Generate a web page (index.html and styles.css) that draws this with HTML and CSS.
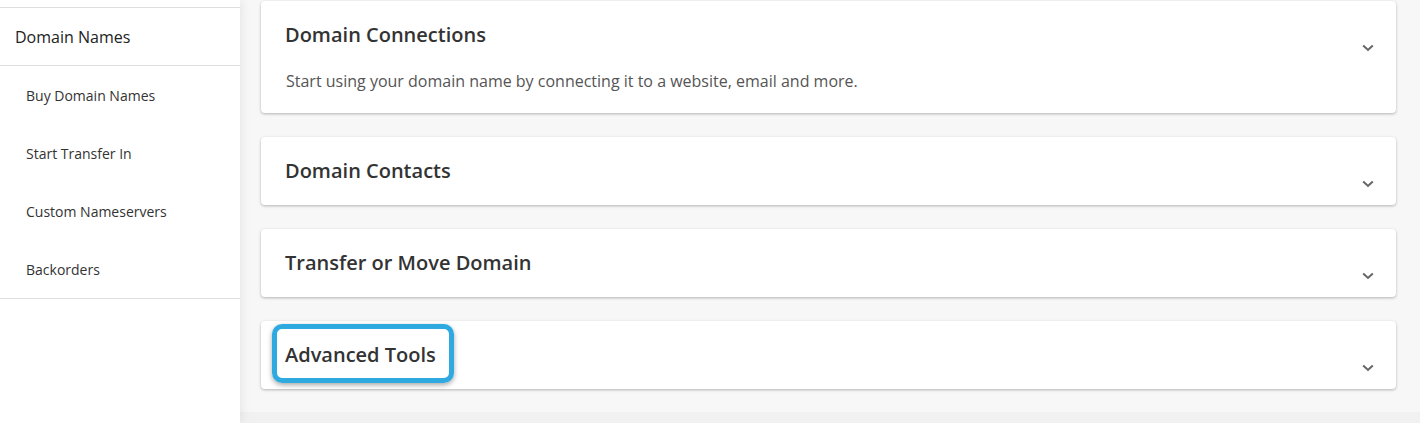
FILE: index.html
```html
<!DOCTYPE html>
<html>
<head>
<meta charset="utf-8">
<link rel="stylesheet" href="styles.css">
</head>
<body>
<div class="page">
  <aside class="sidebar">
    <div class="side-top"></div>
    <div class="side-head">Domain Names</div>
    <ul class="side-list">
      <li>Buy Domain Names</li>
      <li>Start Transfer In</li>
      <li>Custom Nameservers</li>
      <li>Backorders</li>
    </ul>
  </aside>
  <main class="main">
    <section class="card">
      <div class="card-head">
        <h2 class="card-title">Domain Connections</h2>
        <svg class="chev" width="12" height="8" viewBox="0 0 12 8"><path d="M1.2 1.5 L6 6 L10.8 1.5" fill="none" stroke="#666" stroke-width="2"/></svg>
      </div>
      <p class="card-desc">Start using your domain name by connecting it to a website, email and more.</p>
    </section>
    <section class="card">
      <div class="card-head">
        <h2 class="card-title">Domain Contacts</h2>
        <svg class="chev" width="12" height="8" viewBox="0 0 12 8"><path d="M1.2 1.5 L6 6 L10.8 1.5" fill="none" stroke="#666" stroke-width="2"/></svg>
      </div>
    </section>
    <section class="card">
      <div class="card-head">
        <h2 class="card-title">Transfer or Move Domain</h2>
        <svg class="chev" width="12" height="8" viewBox="0 0 12 8"><path d="M1.2 1.5 L6 6 L10.8 1.5" fill="none" stroke="#666" stroke-width="2"/></svg>
      </div>
    </section>
    <section class="card">
      <div class="card-head">
        <h2 class="card-title"><span class="highlight">Advanced Tools</span></h2>
        <svg class="chev" width="12" height="8" viewBox="0 0 12 8"><path d="M1.2 1.5 L6 6 L10.8 1.5" fill="none" stroke="#666" stroke-width="2"/></svg>
      </div>
    </section>
  </main>
</div>
</body>
</html>
```

FILE: styles.css
```css
html, body {
  margin: 0;
  padding: 0;
}
body {
  background: #f1f1f1;
  font-family: "Open Sans", "Liberation Sans", sans-serif;
  color: #333;
  height: 423px;
  overflow: hidden;
}
.page {
  display: flex;
  align-items: stretch;
  height: 423px;
}
.sidebar {
  width: 240px;
  flex: none;
  background: #fff;
  position: relative;
  z-index: 1;
  box-shadow: 2px 0 9px rgba(0, 0, 0, 0.07);
}
.side-top {
  height: 7px;
  border-bottom: 1px solid #dedede;
}
.side-head {
  height: 58px;
  box-sizing: border-box;
  border-bottom: 1px solid #dedede;
  display: flex;
  align-items: center;
  padding-left: 15px;
  font-size: 16px;
  color: #222;
}
.side-list {
  list-style: none;
  margin: 0;
  padding: 0;
  border-bottom: 1px solid #dedede;
}
.side-list li {
  height: 58px;
  display: flex;
  align-items: center;
  padding-left: 26px;
  font-size: 14px;
  color: #333;
}
.main {
  flex: 1;
  background: #f7f7f7;
  padding: 1px 24px 23px 21px;
  display: flex;
  flex-direction: column;
  gap: 24px;
  align-self: flex-start;
}
.card {
  background: #fff;
  border-radius: 4px;
  box-shadow: 0 1px 3px rgba(0, 0, 0, 0.28);
  padding: 20px 22px 20px 24px;
}
.card-head {
  display: flex;
  justify-content: space-between;
  align-items: flex-start;
  height: 28px;
}
.card-title {
  margin: 0;
  font-size: 20px;
  line-height: 28px;
  font-weight: 600;
  color: #333;
}
.chev {
  margin-top: 23px;
  display: block;
  flex: none;
}
.card-desc {
  margin: 20px 0 0 1px;
  font-size: 16px;
  line-height: 24px;
  color: #555;
}
.highlight {
  position: relative;
  display: inline-block;
}
.highlight::after {
  content: "";
  position: absolute;
  left: -13px;
  top: -17px;
  right: -18px;
  bottom: -14px;
  border: 5px solid #2eaae1;
  border-radius: 10px;
  box-shadow: 0 2px 5px rgba(0, 0, 0, 0.35);
}
```
